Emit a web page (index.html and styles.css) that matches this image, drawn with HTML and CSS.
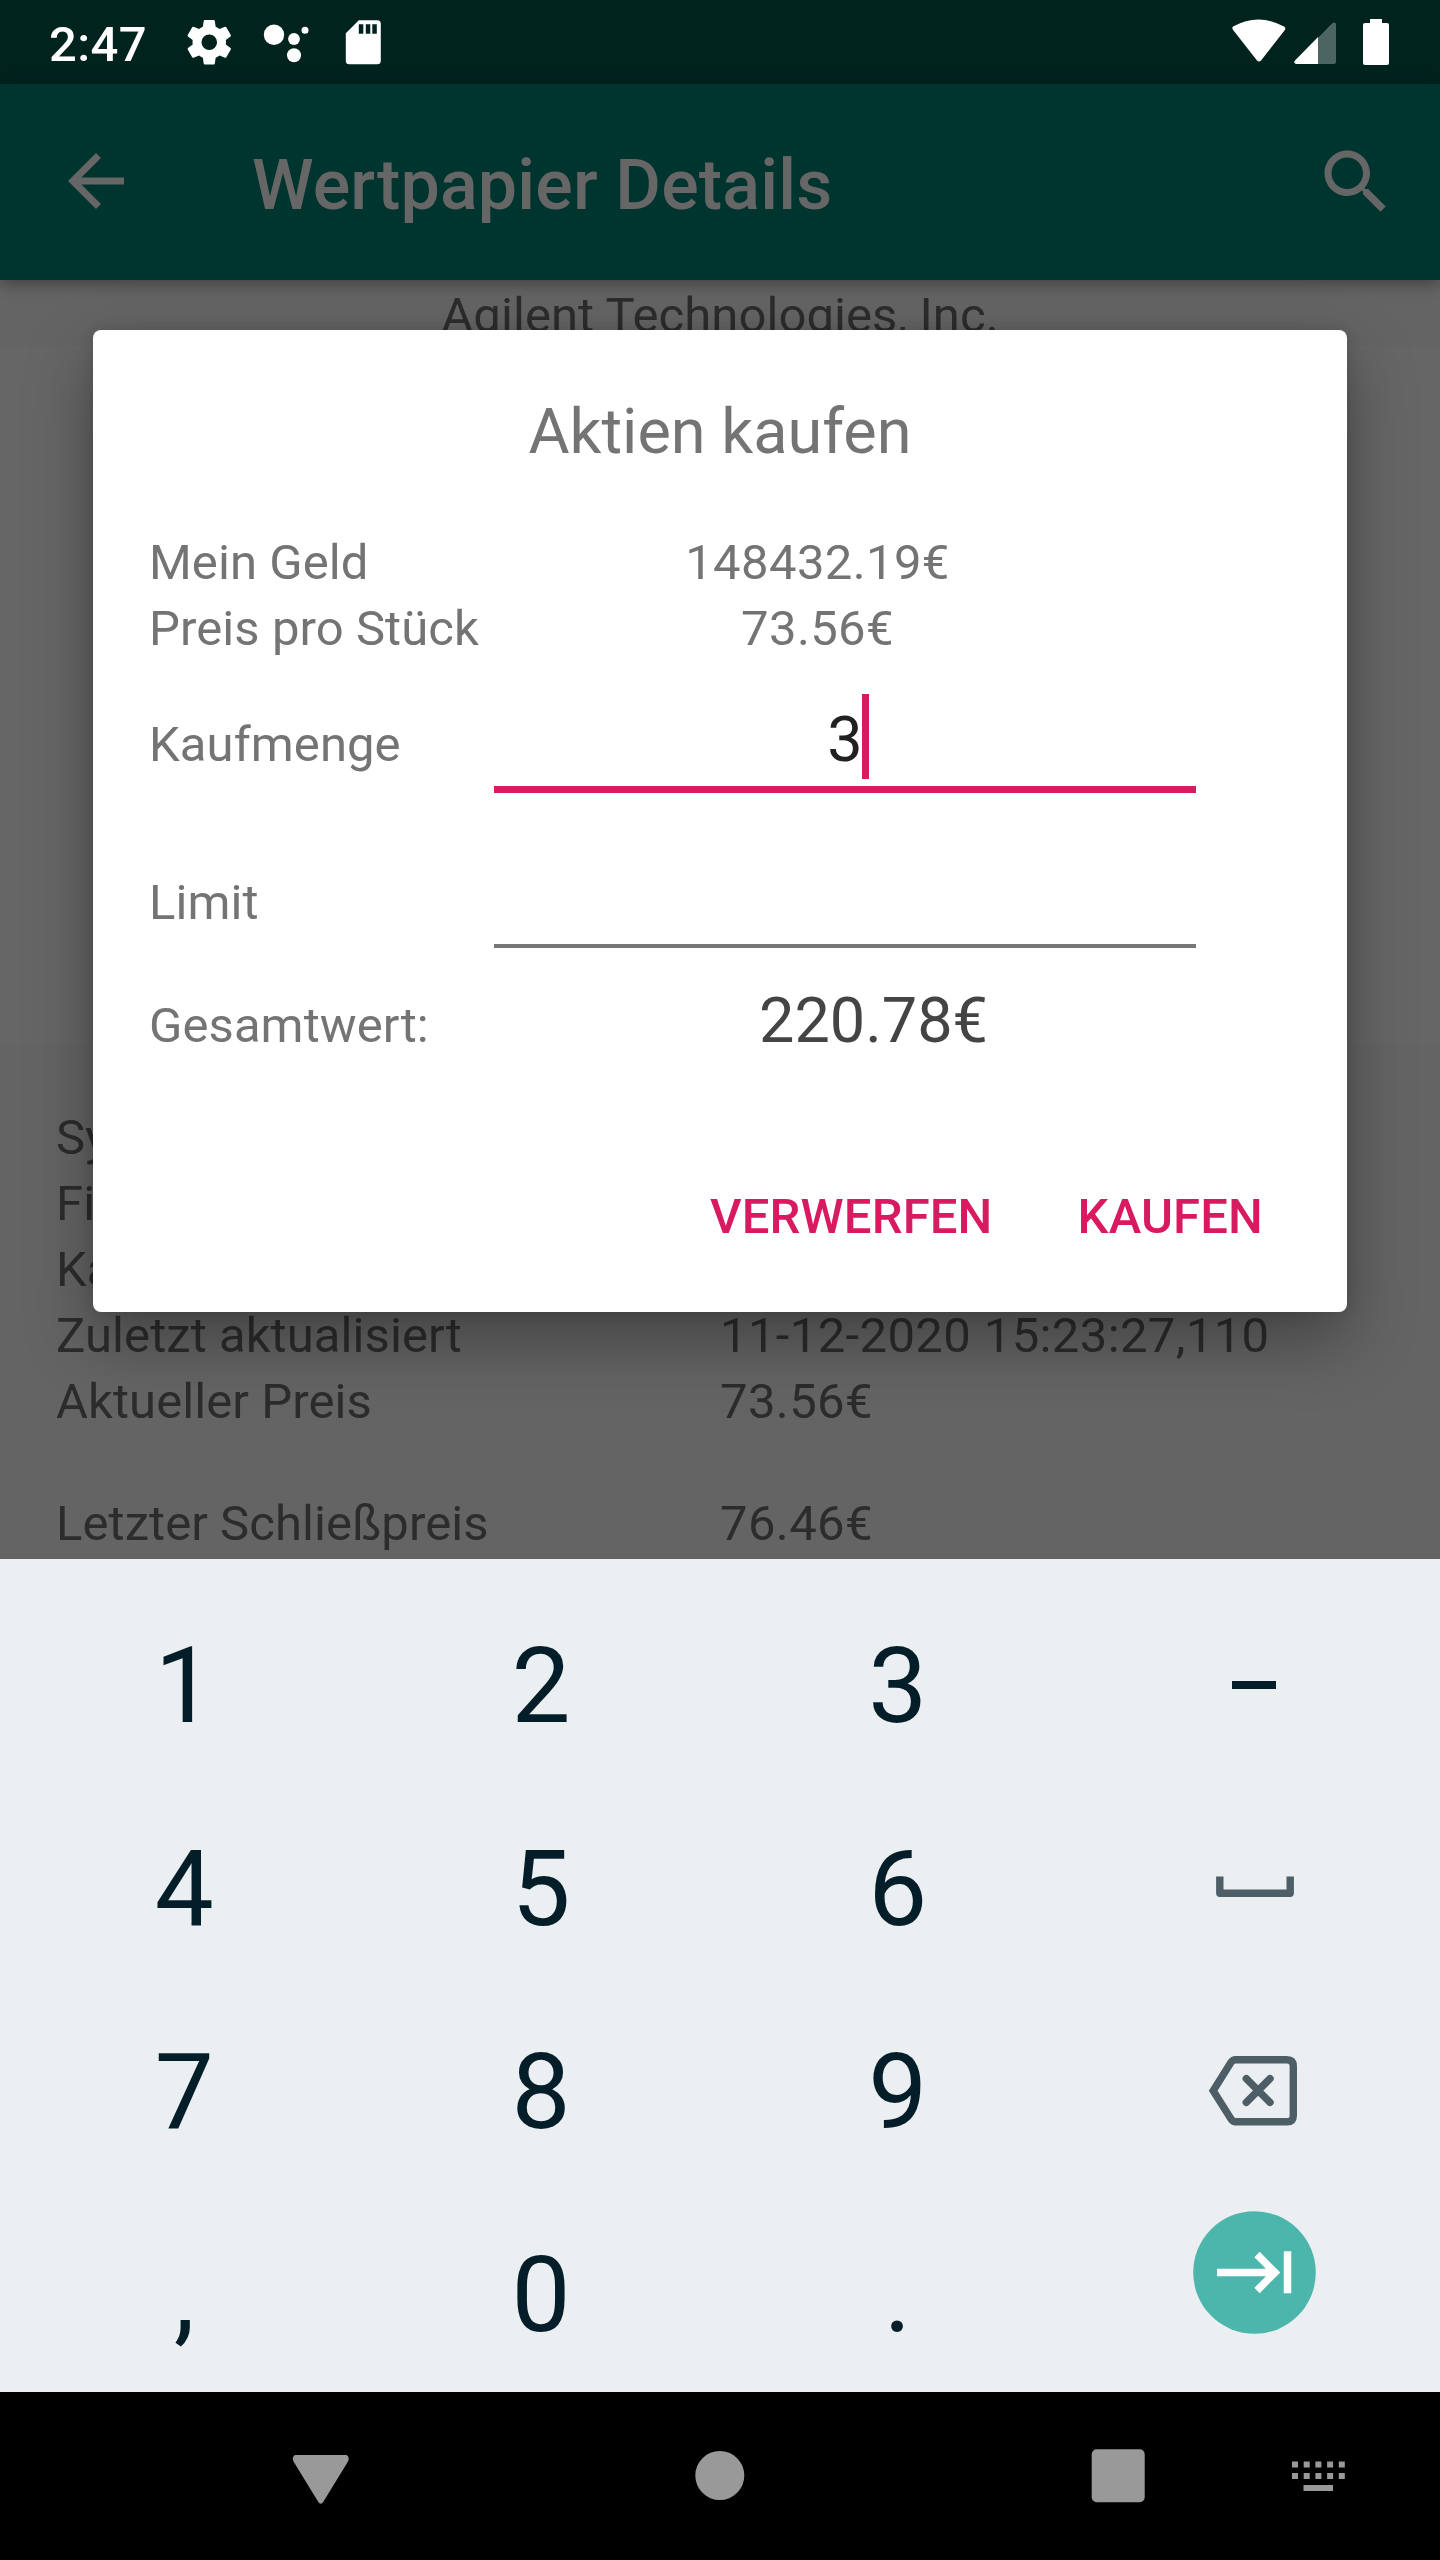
FILE: index.html
```html
<!DOCTYPE html>
<html lang="de">
<head>
<meta charset="utf-8">
<title>Wertpapier Details</title>
<link rel="stylesheet" href="styles.css">
</head>
<body>
<div class="screen">
  <header class="status">
    <span class="clock">2:47</span>
    <svg class="status-icons" width="200" height="50" viewBox="0 0 200 50">
      <g fill="#fff">
        <path transform="translate(-4.5 -3.5) scale(2.23)" fill-rule="evenodd" d="M19.43 12.98c.04-.32.07-.64.07-.98s-.03-.66-.07-.98l2.11-1.65c.19-.15.24-.42.12-.64l-2-3.46c-.12-.22-.39-.3-.61-.22l-2.49 1c-.52-.4-1.08-.73-1.69-.98l-.38-2.65C14.46 2.18 14.25 2 14 2h-4c-.25 0-.46.18-.49.42l-.38 2.65c-.61.25-1.17.59-1.69.98l-2.49-1c-.23-.09-.49 0-.61.22l-2 3.46c-.13.22-.07.49.12.64l2.11 1.65c-.04.32-.07.65-.07.98s.03.66.07.98l-2.11 1.65c-.19.15-.24.42-.12.64l2 3.46c.12.22.39.3.61.22l2.49-1c.52.4 1.08.73 1.69.98l.38 2.65c.03.24.24.42.49.42h4c.25 0 .46-.18.49-.42l.38-2.65c.61-.25 1.17-.59 1.69-.98l2.49 1c.23.09.49 0 .61-.22l2-3.46c.12-.22.07-.49-.12-.64zM12 15.5a3.5 3.5 0 1 1 0-7 3.5 3.5 0 0 1 0 7z"/>
        <circle cx="87" cy="15.700" r="10.200"/><circle cx="107" cy="20" r="5.900"/><circle cx="118" cy="11.300" r="3.500"/><circle cx="107" cy="36.300" r="7"/>
        <path transform="translate(.8 .3)" fill-rule="evenodd" d="M171 1h18.500q3.500 0 3.500 3.500v37q0 3.500-3.500 3.500h-28q-3.500 0-3.500-3.500v-27.500zM171 5v9.500h4.500v-9.500zM178 5v9.500h4.500v-9.500zM184.500 5v9.500h4.500v-9.500z"/>
      </g>
    </svg>
    <svg class="radio-icons" width="160" height="50" viewBox="0 0 160 50">
      <path fill="#fff" transform="translate(-.5 -1)" d="M1.500 8.500Q27 -5.500 52.500 8.500Q55 10 53 12.500L29.500 42.500Q27.500 44.500 25.500 42.500L2 12.500Q0 10 1.500 8.500z"/>
      <path fill="#4d6561" d="M63.500 42L100 4.500Q104 2 104 6V42.500Q104 45 101.500 45H64z"/>
      <path fill="#fff" d="M86 18V45H64Q61 43.500 63 41.500z"/>
      <path fill="#fff" d="M138 0h12v4h5q2 0 2 2v38q0 2-2 2h-22q-2 0-2-2V6q0-2 2-2h5z"/>
    </svg>
  </header>
  <header class="appbar">
    <svg class="back" width="84" height="84" viewBox="0 0 24 24"><path d="M20 11H7.830l5.590-5.590L12 4l-8 8 8 8 1.410-1.410L7.830 13H20v-2z"/></svg>
    <h1>Wertpapier Details</h1>
    <svg class="search" width="84" height="84" viewBox="0 0 24 24"><path d="M15.500 14h-.79l-.28-.27C15.410 12.590 16 11.110 16 9.500 16 5.910 13.090 3 9.500 3S3 5.910 3 9.500 5.910 16 9.500 16c1.610 0 3.090-.59 4.230-1.570l.27.28v.79l5 4.990L20.490 19l-4.990-5zm-6 0C7.010 14 5 11.990 5 9.500S7.010 5 9.500 5 14 7.010 14 9.500 11.990 14 9.500 14z"/></svg>
  </header>
  <main class="content">
    <p class="company">Agilent Technologies, Inc.</p>
    <div class="chart"></div>
    <dl class="details">
      <dt>Symbol</dt><dd></dd>
      <dt>Firma</dt><dd></dd>
      <dt>Kategorie</dt><dd></dd>
      <dt>Zuletzt aktualisiert</dt><dd>11-12-2020 15:23:27,110</dd>
      <dt>Aktueller Preis</dt><dd>73.56€</dd>
      <dt class="spaced">Letzter Schließpreis</dt><dd class="spaced">76.46€</dd>
    </dl>
  </main>
  <section class="keyboard">
    <span>1</span><span>2</span><span>3</span>
    <span><i class="minus"></i></span>
    <span>4</span><span>5</span><span>6</span>
    <span><svg class="space" width="78" height="21" viewBox="0 0 78 21"><path fill="none" stroke="#4d5e67" stroke-width="7.400" stroke-linejoin="round" d="M3.800 .5V17.200H74.200V.5"/></svg></span>
    <span>7</span><span>8</span><span>9</span>
    <span><svg class="erase" width="90" height="71" viewBox="0 0 90 71" fill="none" stroke="#4d5e67" stroke-width="7.400"><path stroke-linejoin="miter" d="M27.500 4.700H79Q85.300 4.700 85.300 11V60.400Q85.300 66.700 79 66.700H27.500Q25 66.700 23 64L5.200 35.700L23 7.400Q25 4.700 27.500 4.700z"/><path stroke-linecap="round" d="M38.300 23.700L62 47.400M62 23.700L38.300 47.400"/></svg></span>
    <span>,</span><span>0</span><span>.</span>
    <span><svg class="next" width="123" height="123" viewBox="0 0 123 123"><circle cx="61.500" cy="61.500" r="61.300" fill="#4db6ac"/><path fill="none" stroke="#fff" stroke-width="7.500" d="M24 61.500H82M64 43.500L82 61.500L64 79.500M94.500 40.300V82.300"/></svg></span>
  </section>
  <footer class="nav">
    <svg width="1140" height="60" viewBox="0 0 1140 60" fill="#999">
      <path d="M5 8H56.500Q60 10 58 14.500L33.500 54.500Q30.700 59 28 54.500L3.500 14.500Q1.500 10 5 8z"/>
      <circle cx="429.800" cy="28.500" r="24.500"/>
      <rect x="801.700" y="2.300" width="53" height="53" rx="5"/>
      <path stroke="#999" stroke-width="6" stroke-dasharray="6 5.700" d="M1002 17.500H1055M1002 29H1055"/><path d="M1013.500 38h29.500v6h-29.500z"/>
    </svg>
  </footer>
  <section class="dialog">
    <h2>Aktien kaufen</h2>
    <div class="row cash"><span>Mein Geld</span><b class="mid">148432.19€</b></div>
    <div class="row price"><span>Preis pro Stück</span><b class="mid">73.56€</b></div>
    <div class="row amount"><span>Kaufmenge</span><div class="field focus">3<i class="caret"></i></div></div>
    <div class="row limit"><span>Limit</span><div class="field"></div></div>
    <div class="row total"><span>Gesamtwert:</span><b class="sum">220.78€</b></div>
    <div class="actions"><span>VERWERFEN</span><span>KAUFEN</span></div>
  </section>
</div>
</body>
</html>
```
FILE: styles.css
```css
* { box-sizing: border-box; margin: 0; padding: 0; }
body { font-family: Roboto, "Liberation Sans", sans-serif; font-size: 49px; line-height: 66px; letter-spacing: .08px; }
svg { display: block; flex: none; }
.screen { position: relative; width: 1440px; height: 2560px; overflow: hidden; display: flex; flex-direction: column; background: #646464; }
.status { flex: none; height: 84px; background: #00231e; color: #fff; display: flex; align-items: flex-start; }
.clock { width: 187px; padding-left: 49px; font-weight: 500; line-height: 89px; letter-spacing: .4px; }
.status-icons { margin-top: 19px; }
.radio-icons { margin: 19px 48px 0 auto; }
.appbar { position: relative; z-index: 1; flex: none; height: 196px; background: #00352f; color: #666; fill: #666; display: flex; align-items: center; padding: 0 42px 0 54px; box-shadow: 0 4px 14px rgba(0,0,0,.35); }
.appbar h1 { margin-left: 114px; font-size: 70px; font-weight: 500; line-height: 84px; padding-top: 5px; letter-spacing: .15px; }
.back { margin-bottom: 3px; }
.search { margin-left: auto; }
.content { flex: none; height: 1279px; overflow: hidden; color: #2c2c2c; }
.company { height: 66px; padding-top: 3px; text-align: center; }
.chart { height: 699px; background: #666; }
.details { display: grid; grid-template-columns: 664px 1fr; padding: 60px 0 0 56px; }
.details dt, .details dd { height: 66px; }
.details dd { letter-spacing: .38px; }
.details .spaced { margin-top: 56px; }
.keyboard { flex: none; height: 833px; background: #ebeff2; color: #041e29; padding: 26px 6px 0; display: grid; grid-template: repeat(4, 203px) / repeat(4, 356.67px); align-content: start; font-size: 105px; line-height: 203px; text-align: center; letter-spacing: 0; }
.keyboard span { display: flex; align-items: center; justify-content: center; }
.minus { width: 44px; height: 8px; margin-bottom: 4px; background: #041e29; }
.space { margin: 0 0 7px 1px; }
.erase { margin: 0 3px 4px 0; }
.next { margin-bottom: 46px; }
.nav { flex: 1; background: #000; padding: 55px 0 0 290px; }
.dialog { position: absolute; z-index: 2; left: 93px; top: 330px; width: 1254px; height: 982px; border-radius: 8px; background: #fff; color: #747474; padding: 59px 56px 0; box-shadow: 0 28px 66px rgba(0,0,0,.34), 0 0 14px rgba(0,0,0,.12); }
.dialog h2 { font-size: 63px; font-weight: 400; line-height: 86px; text-align: center; letter-spacing: 0; }
.row { display: flex; }
.row > span { width: 341px; flex: none; }
.row b { font-weight: 400; text-align: center; letter-spacing: .38px; }
.cash { margin-top: 55px; }
.mid { width: 655px; }
.field { width: 702px; margin-left: 4px; border-bottom: 4px solid #777; }
.amount { height: 131px; }
.amount > span { padding-top: 50px; }
.focus { border-bottom: 7px solid #d81b60; padding-top: 40px; display: flex; justify-content: center; align-items: flex-start; font-size: 63px; line-height: 76px; color: #212121; }
.caret { width: 7px; height: 85px; margin: -8px -6px 0 -1px; background: #d81b60; }
.limit { height: 155px; }
.limit > span { padding-top: 77px; }
.total { height: 111px; }
.total > span { padding-top: 45px; }
.row .sum { width: 767px; padding-top: 40px; font-size: 63px; color: #444; letter-spacing: 0; }
.actions { display: flex; justify-content: flex-end; gap: 85px; padding-right: 28px; margin-top: 125px; color: #d81b60; font-weight: 500; letter-spacing: .15px; }
```
